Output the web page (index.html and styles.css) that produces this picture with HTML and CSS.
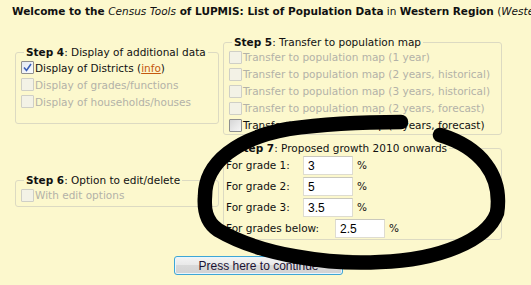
FILE: index.html
```html
<!DOCTYPE html>
<html>
<head>
<meta charset="utf-8">
<link rel="stylesheet" href="styles.css">
</head>
<body>
<div class="page">
  <h1 class="title"><b>Welcome to the </b><i>Census Tools</i><b> of LUPMIS: List of Population Data</b> in <b>Western Region</b> (<i>Western Region</i>)</h1>

  <div class="steps">
    <fieldset class="box box-s4">
      <legend><b>Step 4</b>: Display of additional data</legend>
      <label class="row"><span class="cb cb-on"><svg width="11" height="11" viewBox="0 0 11 11"><path d="M2 5.5 L4.5 8.5 L9 2" fill="none" stroke="#3b5fb6" stroke-width="1.6"/></svg></span>Display of Districts (<a class="info">info</a>)</label>
      <label class="row row-off"><span class="cb cb-dis"></span>Display of grades/functions</label>
      <label class="row row-off"><span class="cb cb-dis"></span>Display of households/houses</label>
    </fieldset>

    <fieldset class="box box-s5">
      <legend><b>Step 5</b>: Transfer to population map</legend>
      <label class="row row-off"><span class="cb cb-dis"></span>Transfer to population map (1 year)</label>
      <label class="row row-off"><span class="cb cb-dis"></span>Transfer to population map (2 years, historical)</label>
      <label class="row row-off"><span class="cb cb-dis"></span>Transfer to population map (3 years, historical)</label>
      <label class="row row-off"><span class="cb cb-dis"></span>Transfer to population map (2 years, forecast)</label>
      <label class="row"><span class="cb"></span>Transfer to population map (3 years, forecast)</label>
    </fieldset>

    <fieldset class="box box-s6">
      <legend><b>Step 6</b>: Option to edit/delete</legend>
      <label class="row row-off"><span class="cb cb-dis"></span>With edit options</label>
    </fieldset>

    <fieldset class="box box-s7">
      <legend><b>Step 7</b>: Proposed growth 2010 onwards</legend>
      <div class="grow"><span class="glabel">For grade 1:</span><span class="inp">3</span><span class="pct">%</span></div>
      <div class="grow"><span class="glabel">For grade 2:</span><span class="inp">5</span><span class="pct">%</span></div>
      <div class="grow"><span class="glabel">For grade 3:</span><span class="inp">3.5</span><span class="pct">%</span></div>
      <div class="grow"><span class="glabel glabel-wide">For grades below:</span><span class="inp">2.5</span><span class="pct">%</span></div>
    </fieldset>
  </div>

  <div class="actions"><button class="btn">Press here to continue</button></div>

  <svg class="scribble" width="531" height="285" viewBox="0 0 531 285">
    <path d="M440 135 C480 147 503 175 497 213 C487 240 440 260 380 262 C330 265 260 255 218 230 C205 221 204 208 205 196 C205 162 238 138 288 129 C330 123 372 122 401 122" fill="none" stroke="#000" stroke-width="14.5" stroke-linecap="round" stroke-linejoin="round"/>
  </svg>
</div>
</body>
</html>
```

FILE: styles.css
```css
html, body {
  margin: 0;
  padding: 0;
  background: #fcf8cd;
  overflow: hidden;
}

.page {
  position: relative;
  width: 531px;
  height: 285px;
  font-family: "DejaVu Sans", Verdana, sans-serif;
  font-size: 10.5px;
  color: #111;
}

.title {
  margin: 0;
  padding: 3px 0 0 12px;
  height: 16px;
  line-height: 16px;
  font-size: 10.5px;
  font-weight: normal;
  white-space: nowrap;
  overflow: hidden;
}

.title b { font-weight: bold; }

.steps {
  display: grid;
  grid-template-columns: 208px 283px;
  align-items: center;
  row-gap: 3px;
  margin: 14.5px 0 0 13px;
  width: 491px;
}

.box {
  margin: 2px;
  padding: 0 4px 0 5px;
  border: 1px solid #dcdac2;
  border-radius: 3px;
  min-width: 0;
}

.box legend {
  padding: 0 2px;
  margin-left: 3px;
  line-height: 13px;
}

.box-s4 { padding-bottom: 13px; }
.box-s5 { padding-bottom: 0; }
.box-s6 { padding-bottom: 2.5px; }
.box-s7 { padding-left: 2px; padding-bottom: 0; }
.box-s7 legend { margin-left: 8px; }

.row {
  display: flex;
  align-items: center;
  height: 17px;
  white-space: nowrap;
}

.row-off { color: #b3b2a8; }

.cb {
  box-sizing: border-box;
  width: 13px;
  height: 13px;
  margin-right: 1px;
  border: 1px solid #8e8f8f;
  border-radius: 1px;
  background: linear-gradient(135deg, #d6d6d6, #f6f6f6);
  display: flex;
  align-items: center;
  justify-content: center;
  flex: none;
}

.cb-on {
  border-color: #8f8f8f;
  background: linear-gradient(135deg, #e2e8f2, #fafcff);
}

.cb-dis {
  border-color: #cfcfc6;
  background: #f3f2e6;
}

.info {
  color: #c4590f;
  text-decoration: underline;
}

.grow {
  display: flex;
  align-items: center;
  height: 21px;
  white-space: nowrap;
}

.glabel { width: 77px; flex: none; }
.glabel-wide { width: 109px; }

.inp {
  box-sizing: border-box;
  width: 50px;
  height: 19px;
  padding: 1px 0 0 4px;
  background: #fff;
  border: 1px solid #dedcd0;
  border-top-color: #c9c8bd;
  font-family: "Liberation Sans", Arial, sans-serif;
  font-size: 12px;
  line-height: 16px;
  color: #000;
  flex: none;
}

.pct { margin-left: 4px; }

.actions {
  display: flex;
  justify-content: center;
  width: 491px;
  margin: 14.5px 0 0 13px;
}

.btn {
  box-sizing: border-box;
  width: 169px;
  height: 19px;
  padding: 0;
  border: 1px solid #3ea6d6;
  border-radius: 3px;
  background: linear-gradient(#f4f4f4, #e9e9e9 45%, #d9d9d9 50%, #d2d2d2);
  box-shadow: inset 0 0 0 1px #e9f6fd;
  font-family: "Liberation Sans", Arial, sans-serif;
  font-size: 12px;
  color: #1b1233;
  line-height: 16px;
}

.scribble {
  position: absolute;
  left: 0;
  top: 0;
  pointer-events: none;
}
```
